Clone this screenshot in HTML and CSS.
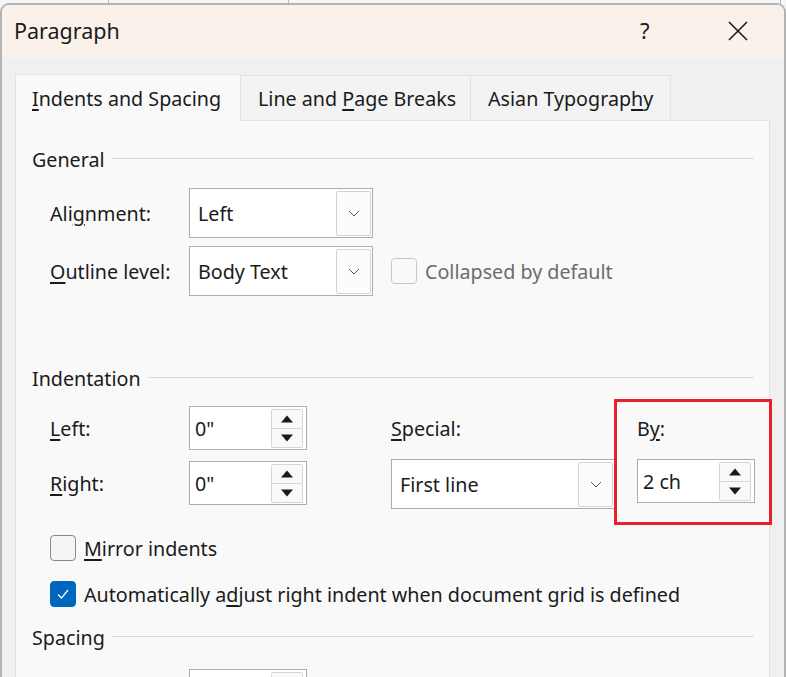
FILE: index.html
```html
<!DOCTYPE html>
<html>
<head>
<meta charset="utf-8">
<link rel="stylesheet" href="styles.css">
</head>
<body>
<div class="backdrop">
  <div class="bd-line l1"></div><div class="bd-line l2"></div><div class="bd-line l3"></div>
</div>
<div class="window">
  <div class="titlebar">
    <div class="title">Paragraph</div>
    <div class="help">?</div>
    <div class="close">
      <svg width="20" height="20" viewBox="0 0 20 20"><path d="M1 1 L19 19 M19 1 L1 19" stroke="#1a1a1a" stroke-width="1.6" fill="none"/></svg>
    </div>
  </div>
  <div class="body">
    <div class="tabs">
      <div class="tab active"><span><u>I</u>ndents and Spacing</span></div>
      <div class="tab"><span>Line and <u>P</u>age Breaks</span></div>
      <div class="tab"><span>Asian Typograp<u>h</u>y</span></div>
    </div>
    <div class="panel">
      <div class="group-head"><span>General</span><div class="rule"></div></div>
      <div class="form-row first">
        <label class="lbl">Ali<u>g</u>nment:</label>
        <div class="combo short"><span class="val">Left</span><div class="drop"><svg width="12" height="7" viewBox="0 0 12 7"><path d="M1 1 L6 6 L11 1" stroke="#5a5a5a" stroke-width="1" fill="none"/></svg></div></div>
      </div>
      <div class="form-row">
        <label class="lbl"><u>O</u>utline level:</label>
        <div class="combo short"><span class="val">Body Text</span><div class="drop"><svg width="12" height="7" viewBox="0 0 12 7"><path d="M1 1 L6 6 L11 1" stroke="#5a5a5a" stroke-width="1" fill="none"/></svg></div></div>
        <div class="check-wrap disabled"><div class="cbox"></div><span>Collapsed by default</span></div>
      </div>

      <div class="group-head indent-head"><span>Indentation</span><div class="rule"></div></div>
      <div class="indent">
        <div class="col-a">
          <div class="spin-row">
            <label class="lbl"><u>L</u>eft:</label>
            <div class="spin"><span class="val">0"</span><div class="arrows"><div class="arr up"></div><div class="arr down"></div></div></div>
          </div>
          <div class="spin-row second">
            <label class="lbl"><u>R</u>ight:</label>
            <div class="spin"><span class="val">0"</span><div class="arrows"><div class="arr up"></div><div class="arr down"></div></div></div>
          </div>
        </div>
        <div class="col-b">
          <label class="lbl top"><span><u>S</u>pecial:</span></label>
          <div class="combo wide"><span class="val">First line</span><div class="drop"><svg width="12" height="7" viewBox="0 0 12 7"><path d="M1 1 L6 6 L11 1" stroke="#5a5a5a" stroke-width="1" fill="none"/></svg></div></div>
        </div>
        <div class="col-c">
          <label class="lbl top"><span>B<u>y</u>:</span></label>
          <div class="spin by"><span class="val">2 ch</span><div class="arrows"><div class="arr up"></div><div class="arr down"></div></div></div>
        </div>
      </div>

      <div class="check-wrap mirror"><div class="cbox"></div><span><u>M</u>irror indents</span></div>
      <div class="check-wrap auto"><div class="cbox checked"><svg width="14" height="12" viewBox="0 0 14 12"><path d="M2 6.5 L5.5 10 L12 2" stroke="#fff" stroke-width="1.2" fill="none"/></svg></div><span>Automatically a<u>d</u>just right indent when document grid is defined</span></div>

      <div class="group-head spacing-head"><span>Spacing</span><div class="rule"></div></div>
      <div class="form-row spacing-row">
        <label class="lbl"></label>
        <div class="spin"><span class="val"></span><div class="arrows"><div class="arr up"></div><div class="arr down"></div></div></div>
      </div>
    </div>
  </div>
</div>
</body>
</html>
```

FILE: styles.css
```css
* { box-sizing: border-box; }
html, body { margin: 0; padding: 0; }
body {
  width: 786px; height: 677px; overflow: hidden; position: relative;
  background: #ffffff;
  font-family: "Noto Sans", "Open Sans", sans-serif;
  color: #1b1b1b;
}
u { text-decoration: underline; text-decoration-thickness: 1.5px; text-underline-offset: 3px; }

.backdrop { position: absolute; left: 0; top: 0; width: 786px; height: 8px; background: #f6f6f6; }
.bd-line { position: absolute; top: 0; width: 1px; height: 6px; background: #b9b9b9; }
.l1 { left: 108px; } .l2 { left: 288px; } .l3 { left: 780px; }

.window {
  position: absolute; left: 0; top: 3px; width: 786px; height: 674px;
  border: 2px solid #b4b4b4; border-bottom: none;
  border-radius: 9px 9px 0 0;
  background: #f0f0f0;
  overflow: hidden;
}
.titlebar {
  height: 53px; background: #f9f1ea;
  display: flex; align-items: center;
  padding-left: 12px;
}
.title { font-size: 21.5px; flex: 1; padding-bottom: 2px; }
.help { font-size: 22px; width: 20px; margin-right: 68px; padding-bottom: 4px; }
.close { width: 20px; margin-right: 36px; display: flex; padding-bottom: 2px; }

.body { padding: 15px 13px 0 13px; }
.tabs { display: flex; align-items: flex-end; height: 47px; }
.tab {
  height: 45px; padding: 1px 0 0 17px;
  display: flex; align-items: center;
  background: #f3f3f3;
  border: 1px solid #e3e3e3; border-bottom: none; border-left: none;
  font-size: 19.7px; white-space: nowrap; flex-shrink: 0;
}
.tab.active {
  height: 47px; width: 226px; background: #f9f9f9;
  border-left: 1px solid #e3e3e3; padding-left: 16px;
  position: relative; top: 1px; z-index: 2;
}
.tabs .tab:nth-child(2) { width: 230px; }
.tabs .tab:nth-child(3) { width: 200px; }

.panel {
  background: #f9f9f9; border: 1px solid #e3e3e3;
  width: 755px; height: 560px;
  padding: 25px 0 0 16px;
}
.group-head { display: flex; align-items: center; height: 26px; font-size: 19.7px; width: 722px; }
.group-head .rule { flex: 1; height: 1px; background: #dcdcdc; margin-left: 7px; margin-top: -2px; }

.lbl { font-size: 19.7px; display: block; padding-top: 1px; }
.form-row { display: flex; align-items: center; margin-left: 18px; height: 50px; margin-top: 8px; }
.form-row.first { margin-top: 16px; }
.form-row .lbl { width: 139px; flex-shrink: 0; }

.combo {
  height: 50px; background: #fff; border: 1px solid #adadad;
  display: flex; align-items: center; justify-content: space-between;
  padding: 2px 1px 2px 8px; font-size: 19.7px; flex-shrink: 0;
}
.combo .val { padding-top: 1px; }
.combo.short { width: 184px; }
.combo.wide { width: 224px; height: 50px; }
.drop {
  width: 35px; height: 45px; border: 1px solid #d4d4d4; border-radius: 2px;
  display: flex; align-items: center; justify-content: center; background: #fcfcfc;
}

.check-wrap { display: flex; align-items: center; font-size: 19.7px; white-space: nowrap; }
.check-wrap span { padding-top: 1px; }
.cbox { width: 26px; height: 26px; border: 1px solid #8b8b8b; border-radius: 4px; background: #f5f5f5; margin-right: 8px; display: flex; align-items: center; justify-content: center; flex-shrink: 0; }
.disabled { color: #6d6d6d; margin-left: 18px; }
.disabled .cbox { border-color: #c8c8c8; background: #fafafa; }
.cbox.checked { background: #0067c0; border-color: #0067c0; }

.indent-head { margin-top: 69px; }
.indent { display: flex; align-items: flex-start; margin-top: 8px; height: 126px; }
.col-a { margin-left: 18px; margin-top: 7px; width: 257px; flex-shrink: 0; }
.spin-row { display: flex; align-items: center; height: 44px; }
.spin-row.second { margin-top: 11px; }
.spin-row .lbl { width: 139px; flex-shrink: 0; }
.spin {
  width: 118px; height: 44px; background: #fff; border: 1px solid #adadad;
  display: flex; align-items: center; justify-content: space-between;
  padding: 2px 3px 2px 5px; font-size: 19.7px; flex-shrink: 0;
}
.spin .val { padding-top: 1px; }
.arrows { width: 32px; height: 39px; display: flex; flex-direction: column; }
.arr {
  flex: 1; border: 1px solid #d6d6d6; background: #f9f9f9; position: relative;
}
.arr.up { border-radius: 2px 2px 0 0; }
.arr.down { border-top: none; border-radius: 0 0 2px 2px; }
.arr::after {
  content: ""; position: absolute; left: 50%; top: 50%; width: 0; height: 0;
  border-left: 6px solid transparent; border-right: 6px solid transparent;
  transform: translate(-50%, -50%);
}
.arr.up::after { border-bottom: 7px solid #1a1a1a; }
.arr.down::after { border-top: 7px solid #1a1a1a; }

.col-b { margin-left: 84px; margin-top: 7px; width: 223px; flex-shrink: 0; }
.lbl.top { height: 44px; display: flex; align-items: center; }
.col-b .combo { margin-top: 9px; }

.col-c {
  width: 158px; height: 126px; border: 3px solid #e8202a; flex-shrink: 0;
  padding: 4px 0 0 20px; position: relative; z-index: 1;
}
.spin.by { margin-top: 9px; }

.mirror { margin-left: 18px; margin-top: 10px; height: 26px; }
.auto { margin-left: 18px; margin-top: 20px; height: 26px; }
.spacing-head { margin-top: 17px; }
.spacing-row { margin-top: 16px; }
```
